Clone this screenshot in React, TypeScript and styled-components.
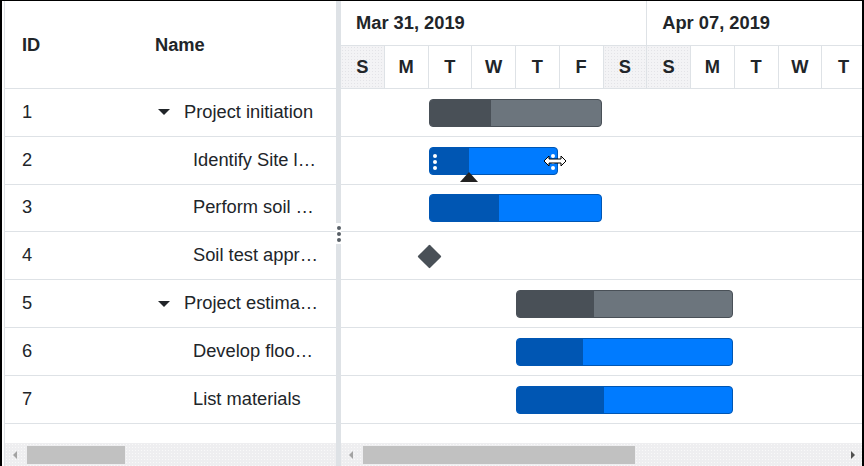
import React from 'react';
import styled, { createGlobalStyle } from 'styled-components';

const GlobalStyle = createGlobalStyle`
  html, body { margin: 0; padding: 0; background: #fff; }
  body { font-family: "Liberation Sans", Arial, sans-serif; color: #212529; }
`;

const DAY = 43.75;
const ROW = 47.8;
const LINE = '#dee2e6';

type Task = {
  id: number;
  name: string;
  parent?: boolean;
  milestone?: boolean;
  startDay: number;
  width?: number;
  progress?: number;
  hover?: boolean;
};

const tasks: Task[] = [
  { id: 1, name: 'Project initiation', parent: true, startDay: 2, width: 173, progress: 62 },
  { id: 2, name: 'Identify Site location', startDay: 2, width: 129, progress: 40, hover: true },
  { id: 3, name: 'Perform soil test', startDay: 2, width: 173, progress: 70 },
  { id: 4, name: 'Soil test approval', milestone: true, startDay: 2 },
  { id: 5, name: 'Project estimation', parent: true, startDay: 4, width: 217, progress: 78 },
  { id: 6, name: 'Develop floor plan for estimation', startDay: 4, width: 217, progress: 67 },
  { id: 7, name: 'List materials', startDay: 4, width: 217, progress: 88 },
];

const weeks = ['Mar 31, 2019', 'Apr 07, 2019'];
const days = ['S', 'M', 'T', 'W', 'T', 'F', 'S', 'S', 'M', 'T', 'W', 'T'];
const weekend = (i: number) => i % 7 === 0 || i % 7 === 6;

const Frame = styled.div`
  width: 864px;
  height: 466px;
  box-sizing: border-box;
  border-top: 1px solid #000;
  border-left: 2px solid #000;
  border-right: 2px solid #000;
  display: flex;
  overflow: hidden;
  background: #fff;
`;

const LeftPane = styled.div`
  width: 332px;
  margin-left: 2px;
  border-left: 1px solid ${LINE};
  box-sizing: border-box;
  display: flex;
  flex-direction: column;
  flex-shrink: 0;
`;

const RightPane = styled.div`
  flex: 1;
  min-width: 0;
  display: flex;
  flex-direction: column;
  overflow: hidden;
`;

const Splitter = styled.div`
  width: 5px;
  flex-shrink: 0;
  background: ${LINE};
  position: relative;
`;

const Grip = styled.div`
  position: absolute;
  left: 0;
  top: 222px;
  width: 5px;
  height: 21px;
  background: #fff;
  display: flex;
  flex-direction: column;
  align-items: center;
  justify-content: center;
  gap: 2px;
`;

const GripDot = styled.span`
  width: 4px;
  height: 4px;
  border-radius: 50%;
  background: #585f66;
`;

const GridHeader = styled.div`
  height: 88px;
  box-sizing: border-box;
  border-bottom: 1px solid ${LINE};
  display: flex;
  align-items: center;
  font-weight: bold;
  font-size: 18.3px;
  padding-top: 1px;
`;

const GridRow = styled.div`
  height: ${ROW}px;
  box-sizing: border-box;
  border-bottom: 1px solid ${LINE};
  display: flex;
  align-items: center;
  font-size: 18.3px;
  padding-bottom: 1px;
`;

const IdCell = styled.div`
  width: 133px;
  flex-shrink: 0;
  padding-left: 17px;
  box-sizing: border-box;
`;

const NameCell = styled.div<{ $indent: number }>`
  flex: 1;
  min-width: 0;
  display: flex;
  align-items: center;
  padding: 0 17.4px 0 ${(p) => 17 + p.$indent}px;
`;

const Expander = styled.svg`
  width: 12px;
  height: 6px;
  margin: 1px 14px 0 3px;
  flex-shrink: 0;
`;

const NameText = styled.span`
  overflow: hidden;
  white-space: nowrap;
  text-overflow: ellipsis;
  min-width: 0;
`;

const Filler = styled.div`
  flex: 1;
`;

const Scrollbar = styled.div`
  height: 23px;
  flex-shrink: 0;
  display: flex;
  align-items: center;
  background-color: #eeeef0;
  background-image: radial-gradient(#f9f9f9 0.7px, transparent 0.8px);
  background-size: 3px 3px;
  padding: 0 7px 0 8px;
  box-sizing: border-box;
`;

const ArrowLeft = styled.span<{ $dark?: boolean }>`
  width: 0;
  height: 0;
  border-top: 4px solid transparent;
  border-bottom: 4px solid transparent;
  border-right: 4px solid ${(p) => (p.$dark ? '#505050' : '#a3a3a3')};
  margin-right: 10px;
`;

const ArrowRight = styled.span`
  width: 0;
  height: 0;
  border-top: 4px solid transparent;
  border-bottom: 4px solid transparent;
  border-left: 4px solid #505050;
  margin-left: auto;
`;

const Thumb = styled.div<{ $w: number }>`
  width: ${(p) => p.$w}px;
  height: 18px;
  background: #c1c1c1;
`;

const ChartHeader = styled.div`
  height: 88px;
  box-sizing: border-box;
  border-bottom: 1px solid ${LINE};
  display: flex;
  flex-direction: column;
  font-weight: bold;
  font-size: 18.3px;
`;

const WeekRow = styled.div`
  height: 45px;
  box-sizing: border-box;
  border-bottom: 1px solid ${LINE};
  display: flex;
`;

const WeekCell = styled.div`
  width: ${DAY * 7}px;
  flex-shrink: 0;
  box-sizing: border-box;
  border-right: 1px solid ${LINE};
  padding-left: 15px;
  display: flex;
  align-items: center;
  white-space: nowrap;
`;

const DayRow = styled.div`
  flex: 1;
  display: flex;
`;

const DayCell = styled.div<{ $weekend: boolean }>`
  width: ${DAY}px;
  flex-shrink: 0;
  box-sizing: border-box;
  border-right: 1px solid ${LINE};
  display: flex;
  align-items: center;
  justify-content: center;
  background-color: ${(p) => (p.$weekend ? '#f3f3f5' : '#fff')};
  background-image: ${(p) =>
    p.$weekend ? 'radial-gradient(#e3e3e7 0.6px, transparent 0.7px)' : 'none'};
  background-size: 3px 3px;
`;

const ChartRow = styled.div`
  height: ${ROW}px;
  box-sizing: border-box;
  border-bottom: 1px solid ${LINE};
  display: flex;
  align-items: center;
  padding-top: 1px;
`;

const Bar = styled.div<{ $parent?: boolean }>`
  position: relative;
  height: 28px;
  box-sizing: border-box;
  border-radius: 4px;
  border: 1px solid ${(p) => (p.$parent ? '#495057' : '#0056b3')};
  background: ${(p) => (p.$parent ? '#6c757d' : '#007bff')};
  flex-shrink: 0;
`;

const Progress = styled.div<{ $parent?: boolean }>`
  height: 100%;
  border-radius: 3px 0 0 3px;
  background: ${(p) => (p.$parent ? '#495057' : '#0056b3')};
`;

const Diamond = styled.div`
  width: 17px;
  height: 17px;
  background: #495057;
  transform: rotate(45deg);
  border-radius: 1px;
  flex-shrink: 0;
`;

const Handle = styled.div<{ $side: 'left' | 'right' }>`
  position: absolute;
  top: 6px;
  ${(p) => (p.$side === 'left' ? 'left: 3px;' : 'right: 2px;')}
  display: flex;
  flex-direction: column;
  gap: 2px;
`;

const HandleDot = styled.span`
  width: 4px;
  height: 4px;
  border-radius: 50%;
  background: #fff;
`;

const ProgressHandle = styled.div`
  position: absolute;
  top: 24px;
  width: 0;
  height: 0;
  border-left: 9px solid transparent;
  border-right: 9px solid transparent;
  border-bottom: 10px solid #222;
  transform: translateX(-50%);
`;

const Cursor = styled.svg`
  position: absolute;
  top: 6px;
  left: 113px;
  width: 24px;
  height: 14px;
`;

function GanttBar({ t }: { t: Task }) {
  const left = Math.round(t.startDay * DAY);
  if (t.milestone) {
    return <Diamond style={{ marginLeft: left - 8.5 }} />;
  }
  return (
    <Bar $parent={t.parent} style={{ marginLeft: left, width: t.width }}>
      <Progress $parent={t.parent} style={{ width: t.progress! - 1 }} />
      {t.hover && (
        <>
          <Handle $side="left">
            <HandleDot />
            <HandleDot />
            <HandleDot />
          </Handle>
          <Handle $side="right">
            <HandleDot />
            <HandleDot />
            <HandleDot />
          </Handle>
          <ProgressHandle style={{ left: t.progress! - 1 }} />
          <Cursor viewBox="0 0 24 14">
            <path
              d="M1 7 L6 2 L6 5 L18 5 L18 2 L23 7 L18 12 L18 9 L6 9 L6 12 Z"
              fill="#fff"
              stroke="#000"
              strokeWidth="1"
              strokeLinejoin="miter"
            />
          </Cursor>
        </>
      )}
    </Bar>
  );
}

export default function App() {
  return (
    <>
      <GlobalStyle />
      <Frame>
        <LeftPane>
          <GridHeader>
            <IdCell>ID</IdCell>
            <NameCell $indent={0}>Name</NameCell>
          </GridHeader>
          {tasks.map((t) => (
            <GridRow key={t.id}>
              <IdCell>{t.id}</IdCell>
              <NameCell $indent={t.parent ? 0 : 38}>
                {t.parent && (
                  <Expander viewBox="0 0 12 6">
                    <path d="M0 0 L12 0 L6 6 Z" fill="#212529" />
                  </Expander>
                )}
                <NameText>{t.name}</NameText>
              </NameCell>
            </GridRow>
          ))}
          <Filler />
          <Scrollbar>
            <ArrowLeft />
            <Thumb $w={98} />
          </Scrollbar>
        </LeftPane>
        <Splitter>
          <Grip>
            <GripDot />
            <GripDot />
            <GripDot />
          </Grip>
        </Splitter>
        <RightPane>
          <ChartHeader>
            <WeekRow>
              {weeks.map((w) => (
                <WeekCell key={w}>{w}</WeekCell>
              ))}
            </WeekRow>
            <DayRow>
              {days.map((d, i) => (
                <DayCell key={i} $weekend={weekend(i)}>
                  {d}
                </DayCell>
              ))}
            </DayRow>
          </ChartHeader>
          {tasks.map((t) => (
            <ChartRow key={t.id}>
              <GanttBar t={t} />
            </ChartRow>
          ))}
          <Filler />
          <Scrollbar>
            <ArrowLeft />
            <Thumb $w={272} />
            <ArrowRight />
          </Scrollbar>
        </RightPane>
      </Frame>
    </>
  );
}
